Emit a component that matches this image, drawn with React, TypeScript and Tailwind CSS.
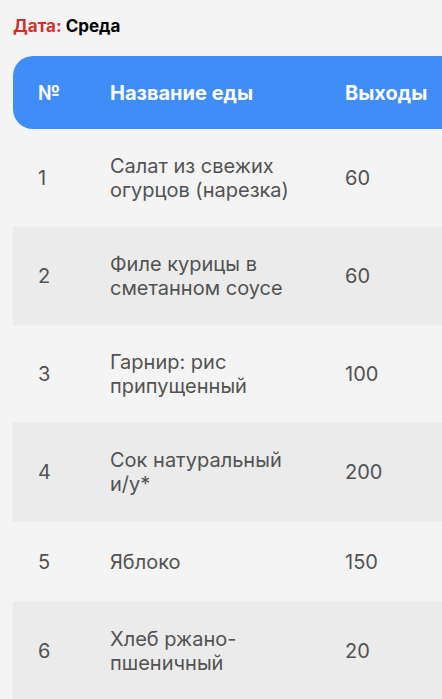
const items = [
  { n: 1, name: "Салат из свежих огурцов (нарезка)", out: "60" },
  { n: 2, name: "Филе курицы в сметанном соусе", out: "60" },
  { n: 3, name: "Гарнир: рис припущенный", out: "100" },
  { n: 4, name: "Сок натуральный", tail: "и/у*", out: "200" },
  { n: 5, name: "Яблоко", out: "150" },
  { n: 6, name: "Хлеб ржано-пшеничный", out: "20" },
];

export default function App() {
  return (
    <div
      className="min-h-[699px] w-[442px] overflow-hidden bg-[#f4f4f4] pl-[13px] pt-[15px]"
      style={{ fontFamily: "Inter, 'Noto Sans', sans-serif" }}
    >
      <p className="text-[17px] font-bold leading-[22px] text-black">
        <span className="text-[#d0312d]">Дата:</span> Среда
      </p>

      <div className="mt-[19px] w-[560px]">
        {/* Header */}
        <div className="flex h-[73px] items-center rounded-l-[20px] bg-[#3f8ef7] text-[20px] font-bold text-white">
          <div className="w-[97px] pl-[25px]">№</div>
          <div className="w-[235px]">Название еды</div>
          <div className="flex-1">Выходы</div>
        </div>

        {/* Rows */}
        {items.map((item, i) => (
          <div
            key={item.n}
            className={`flex min-h-[81px] items-center py-[25px] text-[20px] leading-[24px] text-[#525252] ${
              i % 2 === 1 ? "bg-[#ebebeb] shadow-[0_0_0_1px_#f0f0f0]" : ""
            }`}
          >
            <div className="w-[97px] pl-[25px]">{item.n}</div>
            <div className="w-[235px] pr-[25px]">
              {item.name}
              {item.tail && (
                <>
                  {" "}
                  <span className="whitespace-nowrap">{item.tail}</span>
                </>
              )}
            </div>
            <div className="flex-1">{item.out}</div>
          </div>
        ))}
      </div>
    </div>
  );
}
